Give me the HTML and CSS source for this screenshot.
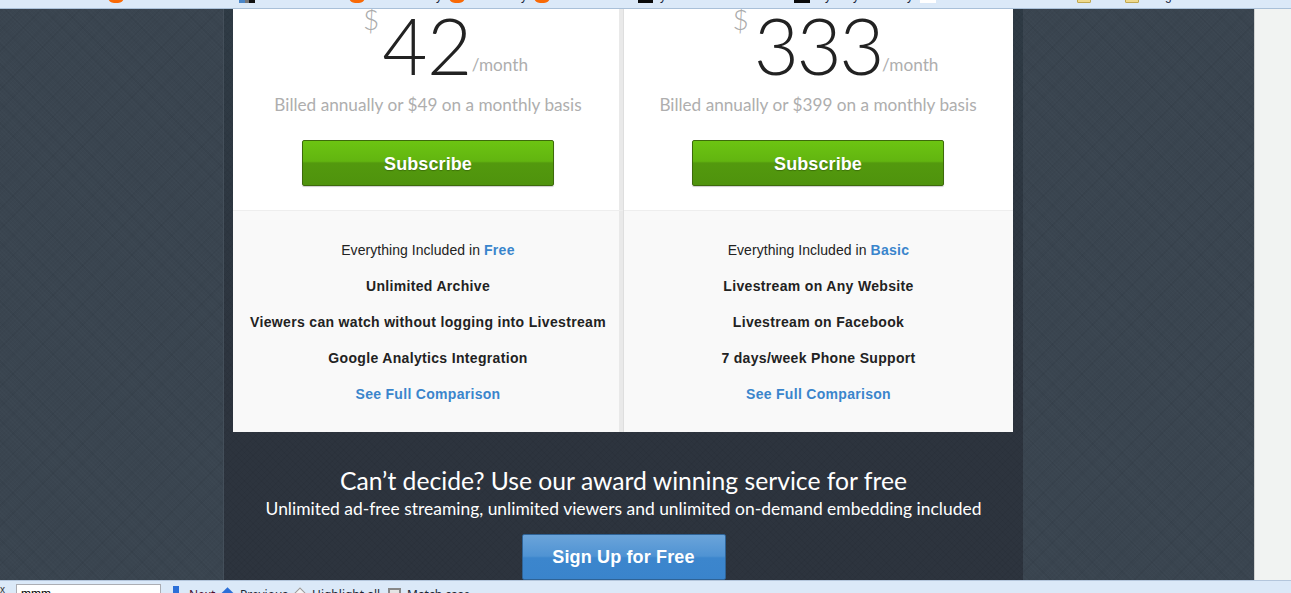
FILE: index.html
```html
<!DOCTYPE html>
<html lang="en">
<head>
<meta charset="utf-8">
<title>Livestream pricing</title>
<link rel="stylesheet" href="styles.css">
</head>
<body>
<div class="window">
  <div class="topbar">
    <i class="fav orange m108"></i>
    <i class="fav photo m239"></i>
    <i class="fav orange m349"></i>
    <span class="tail m437">y</span>
    <i class="fav orange m449"></i>
    <span class="tail m523">y</span>
    <i class="fav orange m534"></i>
    <i class="fav dark m638"></i>
    <span class="tail m661">y</span>
    <i class="fav dark m794"></i>
    <span class="tail m826">y</span>
    <span class="tail m854">y</span>
    <span class="tail m908">y</span>
    <i class="fav white m920"></i>
    <i class="folder m1077"></i>
    <i class="folder m1125"></i>
    <span class="tail m1168">g</span>
  </div>
  <div class="view">
    <main class="page">
      <div class="column">
        <div class="cards">
          <section class="card card-left">
            <div class="card-top">
              <div class="price"><span class="cur">$</span><span class="amount">42</span><span class="per">/month</span></div>
              <p class="billed">Billed annually or $49 on a monthly basis</p>
              <a class="btn-sub">Subscribe</a>
            </div>
            <ul class="features">
              <li class="plain">Everything Included in <a>Free</a></li>
              <li>Unlimited Archive</li>
              <li>Viewers can watch without logging into Livestream</li>
              <li>Google Analytics Integration</li>
              <li><a>See Full Comparison</a></li>
            </ul>
          </section>
          <section class="card card-right">
            <div class="card-top">
              <div class="price"><span class="cur">$</span><span class="amount amount-wide">333</span><span class="per">/month</span></div>
              <p class="billed">Billed annually or $399 on a monthly basis</p>
              <a class="btn-sub">Subscribe</a>
            </div>
            <ul class="features">
              <li class="plain">Everything Included in <a>Basic</a></li>
              <li>Livestream on Any Website</li>
              <li>Livestream on Facebook</li>
              <li>7 days/week Phone Support</li>
              <li><a>See Full Comparison</a></li>
            </ul>
          </section>
        </div>
        <div class="cta">
          <h2>Can’t decide? Use our award winning service for free</h2>
          <p>Unlimited ad-free streaming, unlimited viewers and unlimited on-demand embedding included</p>
          <a class="btn-free">Sign Up for Free</a>
        </div>
      </div>
    </main>
    <div class="scrollbar"></div>
  </div>
  <div class="findbar">
    <span class="find-close">x</span>
    <input class="find-input" value="mmm" aria-label="Find">
    <i class="ico-next"></i><span class="find-label l-next">Next</span>
    <i class="ico-prev"></i><span class="find-label l-prev">Previous</span>
    <i class="ico-high"></i><span class="find-label l-high">Highlight all</span>
    <i class="ico-check"></i><span class="find-label l-match">Match case</span>
  </div>
</div>
</body>
</html>
```

FILE: styles.css
```css
* { box-sizing: border-box; }
html, body { margin: 0; padding: 0; overflow: hidden; }
body { font-family: "Liberation Sans", Arial, sans-serif; }
.window { display: flex; flex-direction: column; width: 1291px; height: 593px; overflow: hidden; background: #dbe9f8; }

/* browser bookmarks bar, cut off by the capture */
.topbar { position: relative; flex: none; height: 9px; background: #dbe9f8; border-bottom: 1px solid #a9c0d8; overflow: hidden; }
.fav { position: absolute; top: -13px; width: 16px; height: 16px; }
.orange { background: #f96a06; border-radius: 6px; }
.photo { background: linear-gradient(90deg, #4a86c8 0 40%, #777 40% 65%, #111 65%); top: -13px; }
.dark { background: #0a0a0a; }
.white { background: #fff; }
.folder { position: absolute; top: -4px; width: 14px; height: 7px; background: #efd98c; border: 1px solid #c0a850; border-radius: 1px; }
.tail { position: absolute; top: -11px; font: 12px/14px "Liberation Sans", sans-serif; color: #16233a; }
.m108 { left: 108px; } .m239 { left: 239px; } .m349 { left: 349px; } .m437 { left: 436px; }
.m449 { left: 449px; } .m523 { left: 521px; } .m534 { left: 534px; } .m638 { left: 638px; width: 15px; }
.m661 { left: 660px; } .m794 { left: 794px; } .m826 { left: 825px; } .m854 { left: 853px; }
.m908 { left: 907px; } .m920 { left: 920px; } .m1077 { left: 1077px; } .m1125 { left: 1125px; } .m1168 { left: 1165px; }

.view { flex: none; display: flex; height: 571px; overflow: hidden; }
.page {
  flex: none; width: 1254px; height: 571px; overflow: hidden; display: flex; justify-content: center; padding-right: 8px;
  background-color: #3a4550;
  background-image:
    repeating-linear-gradient(45deg, rgba(20,28,36,.05) 0 2px, transparent 2px 14px),
    repeating-linear-gradient(-45deg, rgba(20,28,36,.05) 0 2px, transparent 2px 14px),
    repeating-linear-gradient(45deg, rgba(255,255,255,.012) 0 1px, transparent 1px 3px),
    repeating-linear-gradient(-45deg, rgba(0,0,0,.025) 0 1px, transparent 1px 3px);
}
.scrollbar { flex: none; width: 37px; background: #f1f3f2; border-left: 1px solid #d0d2d2; }

.column {
  flex: none; width: 800px; padding: 0 10px 0 9px;
  border-left: 1px solid #444f5a;
  background-color: #2d353f;
  background-image:
    repeating-linear-gradient(45deg, rgba(0,0,0,.035) 0 1px, transparent 1px 4px),
    repeating-linear-gradient(-45deg, rgba(0,0,0,.035) 0 1px, transparent 1px 4px),
    linear-gradient(#2f3b45, #2d343e 70%);
}
.cards { display: grid; grid-template-columns: 390px 390px; }
.card { display: flex; flex-direction: column; height: 423px; background: #f9f9f9; }
.card-left > * { box-shadow: inset -4px 0 #e9e9e9; }
.card-right { border-left: 1px solid #dedede; }
.card-right .card-top { padding-right: 1px; }
.card-top { height: 202px; background: #fff; border-bottom: 1px solid #eee; display: flex; flex-direction: column; align-items: center; }

.price { display: flex; align-items: flex-start; height: 76px; padding-left: 35px; color: #222; font-family: Lato, sans-serif; }
.cur { font-size: 28px; font-weight: 300; line-height: 30px; color: #aaa; margin-top: -5px; margin-right: 3px; }
.amount { font-size: 78px; font-weight: 300; line-height: 76px; margin-top: -2px; letter-spacing: -.5px; }
.amount-wide { letter-spacing: -2.5px; margin-left: 2px; }
.per { font-size: 17.2px; line-height: 20px; color: #aeaeae; margin-top: 46px; }
.billed { margin: 10px 0 0; font: 17.2px/20px Lato, sans-serif; color: #aeaeae; }
.btn-sub {
  display: flex; align-items: center; justify-content: center; width: 252px; height: 46px; margin-top: 25px; padding-top: 2px;
  border: 1px solid #3d6a0b; border-radius: 2px; color: #fff; font-size: 18px; font-weight: 700; letter-spacing: .1px;
  background: linear-gradient(#6cc412 0, #62b510 46%, #53990e 50%, #4f930d 100%);
  box-shadow: 0 1px 1px rgba(0,0,0,.2); text-shadow: 0 1px 1px rgba(0,0,0,.25);
}
.features { flex: 1; list-style: none; margin: 0; padding: 21px 0 0; text-align: center; }
.features li { height: 36px; line-height: 36px; font-size: 14px; font-weight: 700; color: #222; letter-spacing: .33px; }
.features li.plain { font-weight: 400; letter-spacing: .05px; }
.features a { color: #3a85cc; font-weight: 700; letter-spacing: .3px; }

.cta { display: flex; flex-direction: column; align-items: center; padding: 33px 0 0 1px; color: #fff; font-family: Lato, sans-serif; }
.cta h2 { margin: 0; font-size: 24.7px; line-height: 31px; font-weight: 400; white-space: nowrap; }
.cta p { margin: 0; font-size: 17.44px; line-height: 26px; white-space: nowrap; }
.btn-free {
  display: flex; align-items: center; justify-content: center; flex: none; width: 204px; height: 46px; margin-top: 12px;
  border: 1px solid #2f6396; border-radius: 2px; color: #fff; font: 700 18px "Liberation Sans", sans-serif; letter-spacing: .15px;
  background: linear-gradient(#6ba4da 0, #4f93d3 48%, #3c86cd 52%, #3a84cc 100%);
}

/* browser find bar, cut off by the capture */
.findbar { position: relative; flex: none; height: 13px; background: #dbe9f8; border-top: 1px solid #b4c6dc; overflow: hidden; }
.find-close { position: absolute; left: 0; top: 2px; font: 10px/14px "Liberation Sans", sans-serif; color: #333; }
.find-input { position: absolute; left: 16px; top: 3px; width: 145px; height: 20px; padding: 0 0 0 4px; border: 1px solid #abadb3; background: #fff; font: 12px "Liberation Sans", sans-serif; color: #000; outline: 0; }
.find-label { position: absolute; top: 6px; font: 12px/16px "Noto Sans", sans-serif; color: #1c2733; }
.l-next { left: 189px; color: #4b1030; } .l-prev { left: 240px; } .l-high { left: 312px; } .l-match { left: 407px; }
.ico-next { position: absolute; left: 173px; top: 5px; width: 6px; height: 12px; background: #2b6fd8; }
.ico-prev { position: absolute; left: 223px; top: 8px; width: 9px; height: 9px; background: #2b6fd8; transform: rotate(45deg); }
.ico-high { position: absolute; left: 296px; top: 8px; width: 8px; height: 8px; background: #f4f4f4; border: 1px solid #999; transform: rotate(45deg); }
.ico-check { position: absolute; left: 388px; top: 7px; width: 13px; height: 13px; background: #e4e4e4; border: 2px solid #888; }
```
